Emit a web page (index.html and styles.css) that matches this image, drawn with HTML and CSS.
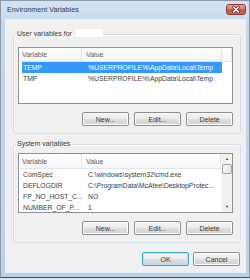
FILE: index.html
```html
<!DOCTYPE html>
<html lang="en">
<head>
  <meta charset="UTF-8">
  <title>Environment Variables</title>
  <link rel="stylesheet" href="styles.css">
</head>
<body>

  <div class="window">
    <div class="titlebar">
      <span class="title">Environment Variables</span>
      <button class="close" aria-label="Close">
        <svg width="20" height="11" viewBox="0 0 20 11">
          <path d="M7.5 3 L12.5 8 M12.5 3 L7.5 8" stroke="#6b2a22" stroke-width="2.6" stroke-linecap="round"/>
          <path d="M7.5 3 L12.5 8 M12.5 3 L7.5 8" stroke="#ffffff" stroke-width="1.3" stroke-linecap="round"/>
        </svg>
      </button>
    </div>

    <div class="client">

      <fieldset class="group group-user">
        <legend>User variables for <span class="blank"></span></legend>
        <div class="list list-user">
          <div class="list-main">
            <div class="head">
              <span class="col">Variable</span>
              <span class="col">Value</span>
              <span class="col"></span>
            </div>
            <div class="row selected"><span>TEMP</span><span>%USERPROFILE%\AppData\Local\Temp</span></div>
            <div class="row"><span>TMP</span><span>%USERPROFILE%\AppData\Local\Temp</span></div>
          </div>
        </div>
        <div class="buttons">
          <button class="btn">New...</button>
          <button class="btn">Edit...</button>
          <button class="btn">Delete</button>
        </div>
      </fieldset>

      <fieldset class="group group-system">
        <legend>System variables</legend>
        <div class="list list-system">
          <div class="list-main">
            <div class="head">
              <span class="col">Variable</span>
              <span class="col">Value</span>
            </div>
            <div class="row"><span>ComSpec</span><span>C:\windows\system32\cmd.exe</span></div>
            <div class="row"><span>DEFLOGDIR</span><span>C:\ProgramData\McAfee\DesktopProtec...</span></div>
            <div class="row"><span>FP_NO_HOST_C...</span><span>NO</span></div>
            <div class="row"><span>NUMBER_OF_P...</span><span>1</span></div>
          </div>
          <div class="scrollbar">
            <div class="arrow">▲</div>
            <div class="thumb"></div>
            <div class="track"></div>
            <div class="arrow">▼</div>
          </div>
        </div>
        <div class="buttons">
          <button class="btn">New...</button>
          <button class="btn">Edit...</button>
          <button class="btn">Delete</button>
        </div>
      </fieldset>

      <div class="actions">
        <button class="btn default">OK</button>
        <button class="btn">Cancel</button>
      </div>

    </div>
  </div>

</body>
</html>
```

FILE: styles.css
```css
html, body {
  margin: 0;
  background: #d9e6ef;
}

body {
  width: 250px;
  height: 280px;
  font-family: 'Liberation Sans', Arial, sans-serif;
  font-size: 7px;
  color: #333;
}

.window {
  box-sizing: border-box;
  width: 250px;
  height: 278px;
  padding: 0 3px 4px 4px;
  border: 1px solid #8d9aa8;
  border-bottom-color: #1d5b78;
  background: linear-gradient(#d4e3f3, #c1d7ee 30px, #b9d2ec);
}

.titlebar {
  height: 18px;
  display: flex;
  align-items: flex-start;
  justify-content: space-between;
}

.title {
  padding-left: 2px;
  line-height: 18px;
  font-size: 7.2px;
  color: #3a3a3a;
}

.close {
  width: 20px;
  height: 11px;
  margin-top: 3px;
  padding: 0;
  border: 1px solid #8e3b31;
  border-radius: 3px;
  background: linear-gradient(#e9a99d, #d47a6c 45%, #c4493a 55%, #d46a58);
  display: flex;
  align-items: center;
  justify-content: center;
}

.close svg {
  display: block;
  margin: -1px;
}

.client {
  box-sizing: border-box;
  height: 254px;
  padding: 10px 5px 0 8px;
  background: #f0f0f0;
}

.group {
  margin: 0;
  padding: 8px 7px 7px 4px;
  min-width: 0;
  border: 1px solid #d5dfe5;
  border-radius: 3px;
  box-shadow: inset 1px 1px 0 #fff;
}

.group-system {
  margin-top: 5px;
  padding-top: 4px;
}

legend {
  padding: 0 1px;
  margin-left: -2px;
  line-height: 10px;
  height: 10px;
  color: #3a3a3a;
}

.blank {
  display: inline-block;
  width: 27px;
  height: 8px;
  margin-left: 2px;
  vertical-align: -1px;
  background: #fff;
}

.list {
  display: flex;
  border: 1px solid #8e9196;
  background: #fff;
}

.list-user {
  height: 55px;
}

.list-system {
  height: 58px;
  overflow: hidden;
}

.list-main {
  flex: 1;
  min-width: 0;
}

.head {
  display: grid;
  grid-template-columns: 63px 140px 1fr;
  height: 13px;
  border-bottom: 1px solid #e3e6ea;
  background: linear-gradient(#fff, #f6f7f9);
  color: #56606c;
}

.list-system .head {
  grid-template-columns: 63px 1fr;
  height: 14px;
}

.head .col {
  line-height: 13px;
  padding-left: 3px;
  border-right: 1px solid #e3e6ea;
}

.list-system .head .col {
  line-height: 15px;
}

.head .col + .col {
  padding-left: 4px;
}

.row {
  display: grid;
  grid-template-columns: 65px 1fr;
  width: 199px;
  height: 11px;
  margin-left: 3px;
  padding-left: 1px;
  line-height: 11px;
  font-size: 6.8px;
  white-space: nowrap;
  color: #3c3c3c;
}

.row.selected {
  background: #3399ff;
  color: #fff;
}

.scrollbar {
  width: 10px;
  display: flex;
  flex-direction: column;
  background: #f1f1f1;
  border-left: 1px solid #f7f7f7;
}

.arrow {
  height: 10px;
  font-size: 4px;
  line-height: 10px;
  text-align: center;
  color: #444;
}

.thumb {
  height: 10px;
  border: 1px solid #a4a4a4;
  border-radius: 2px;
  background: linear-gradient(90deg, #f4f4f4, #e4e4e4);
  box-sizing: border-box;
}

.track {
  flex: 1;
}

.buttons {
  display: flex;
  justify-content: flex-end;
  gap: 5px;
  margin-top: 8px;
}

.btn {
  box-sizing: border-box;
  width: 47px;
  height: 14px;
  padding: 0;
  border: 1px solid #8f8f8f;
  border-radius: 2px;
  background: linear-gradient(#f4f4f4, #ebebeb 50%, #dedede 51%, #d3d3d3);
  box-shadow: inset 0 0 0 1px #fbfbfb;
  font-family: 'Liberation Sans', Arial, sans-serif;
  font-size: 7px;
  color: #3a3a3a;
}

.btn.default {
  border-color: #3aa6d6;
  box-shadow: inset 0 0 0 1px #b5e6f7;
}

.actions {
  display: flex;
  justify-content: flex-end;
  gap: 4px;
  margin-top: 9px;
  padding-right: 1px;
}
```
